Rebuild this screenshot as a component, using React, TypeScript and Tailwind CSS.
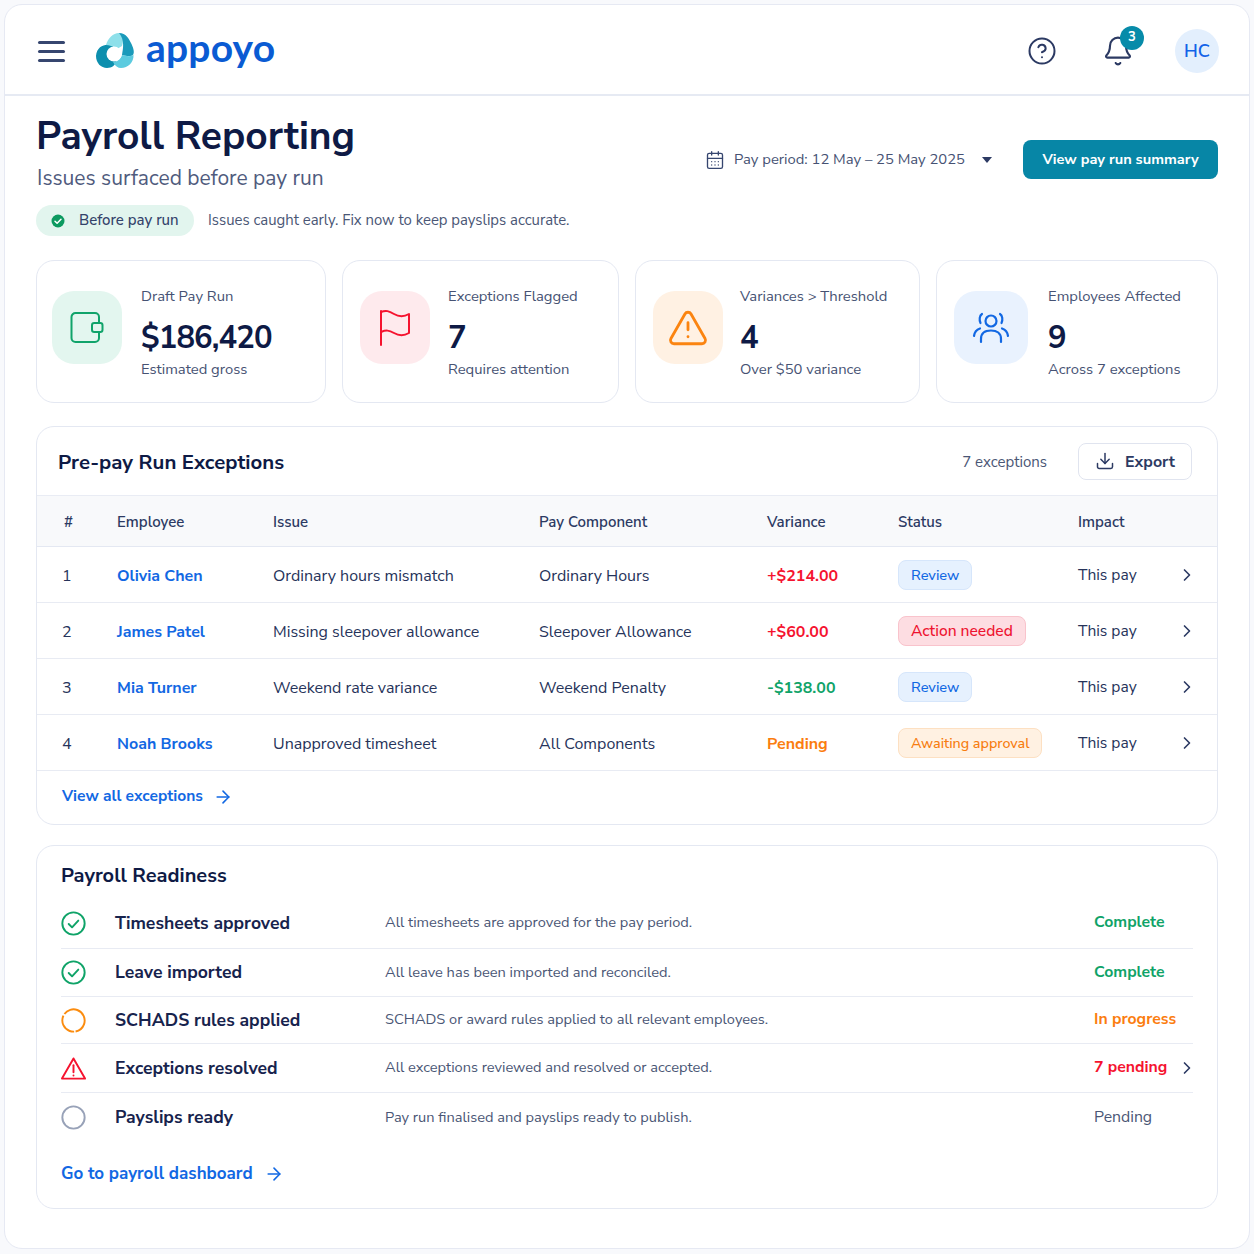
import React from "react";
import { ChevronRight, ArrowRight, Download, CalendarDays, CircleHelp, Bell, TriangleAlert } from "lucide-react";

const F = "font-['Nunito_Sans','Lato','Noto_Sans',sans-serif]";

function Logo() {
  return (
    <svg width="40" height="38" viewBox="0 0 40 38" className="shrink-0">
      <path d="M18 14 C12 11 2 13 1 24 C1 31 6 36 12 36 C17 36 20 33 21 30 L19 22 Z" fill="#0d8fae" />
      <path d="M11 13 C13 6 18 1 24 1 C28 2 29 8 27 14 L22 17 C18 14 14 13 11 13 Z" fill="#8ee0ea" />
      <path d="M24 1 C31 1 34 7 36 11 C38 15 40 20 38 23 C35 25 31 24 27 23 C28 17 30 8 24 1 Z" fill="#1a9aba" />
      <path d="M27 23 C31 24 35 25 38.5 23 C39 30 33 36 26 36 C23 36 20 34 18 30 C22 30 26 27 27 23 Z" fill="#5ccbdf" />
      <circle cx="19" cy="22" r="7.5" fill="#fff" />
    </svg>
  );
}

function WalletIcon() {
  return (
    <svg width="36" height="34" viewBox="0 0 36 34" fill="none" stroke="#10a36a" strokeWidth="2" strokeLinejoin="round" strokeLinecap="round">
      <path d="M30 12 V6 a4 4 0 0 0 -4 -4 H6.5 A4 4 0 0 0 2.5 6 V27 a4 4 0 0 0 4 4 H26 a4 4 0 0 0 4 -4 V21" />
      <rect x="23" y="12" width="10.5" height="9" rx="2.2" />
    </svg>
  );
}

function FlagIcon() {
  return (
    <svg width="34" height="38" viewBox="0 0 34 38" fill="none" stroke="#f5132f" strokeWidth="2" strokeLinejoin="round" strokeLinecap="round">
      <path d="M3 2 V36" />
      <path d="M3 3 C8 1 11 2 16 5 C21 8 26 8 31 5 V24 C26 27 21 27 16 24 C11 21 8 21 3 23" />
    </svg>
  );
}

function UsersIcon() {
  return (
    <svg width="38" height="32" viewBox="0 0 38 32" fill="none" stroke="#1268e3" strokeWidth="2.2" strokeLinecap="round">
      <circle cx="19" cy="9" r="5.5" />
      <path d="M9 30 V27 C9 21 13 18.5 19 18.5 C25 18.5 29 21 29 27 V30" />
      <path d="M10 2 C7.5 3.5 7 8 8.5 11" />
      <path d="M28 2 C30.5 3.5 31 8 29.5 11" />
      <path d="M2 24 C2.5 20 5 17.5 8 16.5" />
      <path d="M36 24 C35.5 20 33 17.5 30 16.5" />
    </svg>
  );
}

function Kpi({ cls, tile, icon, label, value, sub }: { cls: string; tile: string; icon: React.ReactNode; label: string; value: string; sub: string }) {
  return (
    <div className={`h-[143px] rounded-[18px] border border-[#e4e8f2] bg-white flex items-center ${cls}`}>
      <div className={`rounded-[22px] h-[73px] mb-[8px] flex items-center justify-center shrink-0 ${tile}`}>{icon}</div>
      <div className="flex flex-col pt-[2px]">
        <div className="text-[14.8px] leading-[20px] text-[#465273]">{label}</div>
        <div className="text-[31px] leading-[38px] font-bold tracking-[-0.9px] text-[#0e1a45] mt-[13px]">{value}</div>
        <div className="text-[14.8px] leading-[20px] text-[#465273] mt-[2px]">{sub}</div>
      </div>
    </div>
  );
}

const rows = [
  { n: 1, name: "Olivia Chen", issue: "Ordinary hours mismatch", comp: "Ordinary Hours", v: "+$214.00", vc: "text-[#f5132f]", st: "Review", sc: "bg-[#e6f1fe] border-[#d6e6fb] text-[#1268e3] text-[14.6px]" },
  { n: 2, name: "James Patel", issue: "Missing sleepover allowance", comp: "Sleepover Allowance", v: "+$60.00", vc: "text-[#f5132f]", st: "Action needed", sc: "bg-[#fddde2] border-[#f9c3cc] text-[#ee1330] text-[15.6px]" },
  { n: 3, name: "Mia Turner", issue: "Weekend rate variance", comp: "Weekend Penalty", v: "-$138.00", vc: "text-[#0fa368]", st: "Review", sc: "bg-[#e6f1fe] border-[#d6e6fb] text-[#1268e3] text-[14.6px]" },
  { n: 4, name: "Noah Brooks", issue: "Unapproved timesheet", comp: "All Components", v: "Pending", vc: "text-[#fb7d0f]", st: "Awaiting approval", sc: "bg-[#fff1e2] border-[#fde0c2] text-[#f77d10] text-[14.3px]" },
];
const cols = "grid grid-cols-[55px_156px_266px_228px_131px_180px_1fr] items-center pl-[25px] pr-[20px]";

const ok = (
  <svg width="25" height="25" viewBox="0 0 26 26" fill="none" stroke="#0fa368" strokeWidth="2"><circle cx="13" cy="13" r="11.6" /><path d="M8 13.5l3.5 3.5 6.5-7" strokeLinecap="round" strokeLinejoin="round" /></svg>
);
const ready = [
  { icon: ok, t: "Timesheets approved", d: "All timesheets are approved for the pay period.", s: "Complete", c: "text-[#0fa368] font-bold", h: "h-[51px]" },
  { icon: ok, t: "Leave imported", d: "All leave has been imported and reconciled.", s: "Complete", c: "text-[#0fa368] font-bold", h: "h-[48px]" },
  { icon: (
    <svg width="25" height="25" viewBox="0 0 26 26" fill="none" stroke="#fb8c0f" strokeWidth="2"><circle cx="13" cy="13" r="11.6" strokeDasharray="30 1.5 24 2 15.4 0" transform="rotate(-70 13 13)" /></svg>
  ), t: "SCHADS rules applied", d: "SCHADS or award rules applied to all relevant employees.", s: "In progress", c: "text-[#fb7d0f] font-bold", h: "h-[47px]" },
  { icon: (
    <svg width="25" height="25" viewBox="0 0 26 26" fill="none" stroke="#f5132f" strokeWidth="2" strokeLinejoin="round" strokeLinecap="round"><path d="M13 2.5 L25 23.5 H1 Z" /><path d="M13 9.5v7.5" /><path d="M13 20.2v.1" /></svg>
  ), t: "Exceptions resolved", d: "All exceptions reviewed and resolved or accepted.", s: "7 pending", c: "text-[#f5132f] font-bold", h: "h-[49px]", chev: true },
  { icon: (
    <svg width="25" height="25" viewBox="0 0 26 26" fill="none" stroke="#98a2b8" strokeWidth="2"><circle cx="13" cy="13" r="11.6" /></svg>
  ), t: "Payslips ready", d: "Pay run finalised and payslips ready to publish.", s: "Pending", c: "text-[#4a5675]", h: "h-[49px]" },
];

export default function App() {
  return (
    <div className={`w-[1254px] h-[1254px] bg-[#f8f9fc] p-[4px] ${F}`}>
      <div className="w-[1246px] h-[1245px] bg-white rounded-[18px] border border-[#e6e9f3] overflow-hidden">
        <header className="h-[91px] border-b-2 border-[#e6eaf3] flex items-center pt-[3px] pl-[33px] pr-[30px]">
          <div className="flex flex-col gap-[6px] w-[27px]">
            <span className="h-[3px] bg-[#36466f] rounded" />
            <span className="h-[3px] bg-[#36466f] rounded" />
            <span className="h-[3px] bg-[#36466f] rounded" />
          </div>
          <div className="ml-[30px]"><Logo /></div>
          <span className="ml-[11px] text-[39px] leading-none font-bold text-[#0a5bd3] font-['Lato',sans-serif] tracking-[0.2px] -mt-[7px]">appoyo</span>
          <div className="ml-auto flex items-center">
            <CircleHelp size={30} strokeWidth={1.6} className="text-[#2c3a63]" />
            <div className="relative ml-[45px]">
              <Bell size={32} strokeWidth={1.6} className="text-[#2c3a63]" />
              <span className="absolute -top-[9px] left-[18px] w-[24px] h-[24px] rounded-full bg-[#078ba9] text-white text-[13px] font-bold flex items-center justify-center">3</span>
            </div>
            <div className="ml-[41px] w-[44px] h-[44px] pt-[1px] rounded-full bg-[#e3effd] text-[#1263e8] text-[18px] font-semibold flex items-center justify-center">HC</div>
          </div>
        </header>
        <main className="px-[31px]">
          <div className="flex items-start justify-between pt-[18px] h-[164px]">
            <div>
              <h1 className="text-[38.9px] leading-[46px] font-bold text-[#0e1a45]">Payroll Reporting</h1>
              <div className="text-[21px] leading-[28px] text-[#4f5b7d] mt-[4px] pl-[1px]">Issues surfaced before pay run</div>
              <div className="flex items-center mt-[13px]">
                <span className="h-[31px] w-[158px] rounded-full bg-[#e2f5ee] flex items-center pl-[15px] text-[15px] font-medium text-[#33426a]">
                  <svg width="14" height="14" viewBox="0 0 14 14" className="mr-[14px]"><circle cx="7" cy="7" r="6.5" fill="#0c9a60" /><path d="M4 7.2l2.1 2.1 3.9-4" fill="none" stroke="#fff" strokeWidth="1.5" strokeLinecap="round" strokeLinejoin="round" /></svg>
                  Before pay run
                </span>
                <span className="ml-[14px] text-[14.9px] text-[#4a5675]">Issues caught early. Fix now to keep payslips accurate.</span>
              </div>
            </div>
            <div className="flex items-center mt-[26px]">
              <CalendarDays size={20} strokeWidth={1.6} className="text-[#36466f]" />
              <span className="ml-[9px] text-[14.8px] text-[#465273] -mt-[1px]">Pay period: 12 May – 25 May 2025</span>
              <svg width="10" height="6" viewBox="0 0 10 6" className="ml-[17px]"><path d="M0 0h10L5 6z" fill="#2c3a63" /></svg>
              <button className="ml-[31px] w-[195px] h-[39px] rounded-[8px] bg-[#0786a6] text-white text-[14.6px] font-bold">View pay run summary</button>
            </div>
          </div>
          <div className="flex justify-between w-[1182px]">
            <Kpi cls="w-[290px] pl-[15px]" tile="w-[70px] bg-[#e3f6ef] mr-[19px]" icon={<WalletIcon />} label="Draft Pay Run" value="$186,420" sub="Estimated gross" />
            <Kpi cls="w-[277px] pl-[17px]" tile="w-[70px] bg-[#feeaed] mr-[18px]" icon={<FlagIcon />} label="Exceptions Flagged" value="7" sub="Requires attention" />
            <Kpi cls="w-[285px] pl-[17px]" tile="w-[70px] bg-[#fff1e3] mr-[17px]" icon={<TriangleAlert size={42} strokeWidth={1.6} className="text-[#fb8410]" />} label="Variances > Threshold" value="4" sub="Over $50 variance" />
            <Kpi cls="w-[282px] pl-[17px]" tile="w-[74px] bg-[#e9f2fe] mr-[20px]" icon={<UsersIcon />} label="Employees Affected" value="9" sub="Across 7 exceptions" />
          </div>
          <section className="mt-[23px] w-[1182px] h-[399px] rounded-[18px] border border-[#e4e8f2] overflow-hidden">
            <div className="h-[69px] flex items-center pl-[21px] pr-[25px] border-b border-[#e9ecf4]">
              <h2 className="text-[20.4px] font-bold text-[#0e1a45] pt-[3px]">Pre-pay Run Exceptions</h2>
              <span className="ml-auto text-[15px] text-[#4a5675] pt-[2px]">7 exceptions</span>
              <button className="ml-[31px] w-[114px] h-[37px] rounded-[8px] border border-[#e0e4ef] flex items-center justify-center gap-[10px] text-[16px] font-bold text-[#2c3a63]">
                <Download size={20} strokeWidth={1.8} /><span className="pt-[2px]">Export</span>
              </button>
            </div>
            <div className={`${cols} h-[51px] bg-[#f8f9fb] border-b border-[#e4e8f2] pt-[3px] text-[15px] font-semibold text-[#2c3a63]`}>
              <span className="pl-[2px]">#</span><span>Employee</span><span>Issue</span><span>Pay Component</span><span>Variance</span><span>Status</span><span>Impact</span>
            </div>
            {rows.map((r) => (
              <div key={r.n} className={`${cols} h-[56px] border-b border-[#e8ebf3] pt-[3px] text-[16px] text-[#26335a]`}>
                <span>{r.n}</span>
                <span className="font-bold text-[#1268e3] -mt-[1px]">{r.name}</span>
                <span>{r.issue}</span>
                <span>{r.comp}</span>
                <span className={`font-bold -mt-[1px] ${r.vc}`}>{r.v}</span>
                <span className="-mt-[3px]"><span className={`inline-flex items-center h-[30px] px-[12px] pt-[3px] rounded-[8px] border font-medium ${r.sc}`}>{r.st}</span></span>
                <span className="flex items-center justify-between text-[15.6px]">This pay<ChevronRight size={20} strokeWidth={2} className="text-[#2c3a63] -mt-[1px]" /></span>
              </div>
            ))}
            <div className="h-[52px] flex items-center pl-[25px] text-[15.6px] font-bold text-[#1268e3]">
              View all exceptions<ArrowRight size={20} strokeWidth={1.9} className="ml-[10px]" />
            </div>
          </section>
          <section className="mt-[20px] w-[1182px] h-[364px] rounded-[18px] border border-[#e4e8f2] px-[24px] pt-[15px]">
            <h2 className="text-[20px] leading-[30px] font-bold text-[#0e1a45]">Payroll Readiness</h2>
            <div className="mt-[7px]">
              {ready.map((r, i) => (
                <div key={r.t} className={`${r.h} flex items-center ${i < 4 ? "border-b border-[#e8ebf3]" : ""}`}>
                  <span className="w-[54px] shrink-0">{r.icon}</span>
                  <span className="w-[270px] shrink-0 text-[17.6px] font-bold text-[#17234d]">{r.t}</span>
                  <span className="text-[14.6px] text-[#4a5675]">{r.d}</span>
                  <span className={`ml-auto w-[99px] shrink-0 flex items-center justify-between text-[15.8px] ${r.c}`}>{r.s}{r.chev ? <ChevronRight size={20} strokeWidth={2} className="text-[#2c3a63] -mr-[4px]" /> : null}</span>
                </div>
              ))}
            </div>
            <div className="mt-[19px] flex items-center text-[17px] font-bold text-[#1268e3]">
              Go to payroll dashboard<ArrowRight size={20} strokeWidth={1.9} className="ml-[11px]" />
            </div>
          </section>
        </main>
      </div>
    </div>
  );
}
